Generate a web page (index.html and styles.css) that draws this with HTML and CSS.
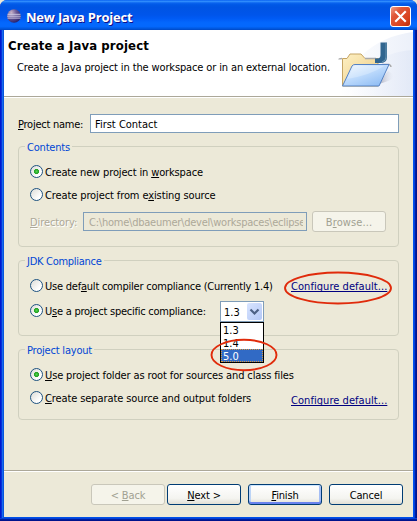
FILE: index.html
```html
<!DOCTYPE html>
<html lang="en">
<head>
<meta charset="utf-8">
<title>New Java Project</title>
<link rel="stylesheet" href="styles.css">
</head>
<body>
<div class="window">
  <header class="titlebar">
    <svg class="app-icon" width="14" height="14" viewBox="0 0 14 14">
      <defs><radialGradient id="ball" cx=".3" cy=".25" r=".8"><stop offset="0" stop-color="#c8b4c8"/><stop offset=".45" stop-color="#6c5c98"/><stop offset="1" stop-color="#28206c"/></radialGradient></defs>
      <circle cx="7" cy="7" r="6.8" fill="url(#ball)"/>
      <path d="M.5 5.3h13M.2 7.2h13.6M.5 9.1h13" stroke="#d5d2ea" stroke-width=".9"/>
    </svg>
    <h1 class="caption">New Java Project</h1>
    <button class="close" aria-label="Close"><svg width="19" height="19" viewBox="0 0 19 19"><path d="M5 5l9 9M14 5l-9 9" stroke="#fff" stroke-width="2.1" stroke-linecap="square"/></svg></button>
  </header>
  <div class="client">
    <section class="banner">
      <div class="banner-text">
        <h2 class="heading">Create a Java project</h2>
        <p class="description">Create a Java project in the workspace or in an external location.</p>
      </div>
      <svg class="banner-art" width="83" height="66" viewBox="330 30 83 66">
        <defs>
          <linearGradient id="haze" x1="0" x2="1"><stop offset="0" stop-color="#fff"/><stop offset="1" stop-color="#dce4f5"/></linearGradient>
          <linearGradient id="front" x1="0" y1="0" x2=".8" y2="1"><stop offset="0" stop-color="#f2f8ff"/><stop offset=".45" stop-color="#c3defd"/><stop offset="1" stop-color="#8ebcf4"/></linearGradient>
          <linearGradient id="back" x1="0" y1="0" x2="1" y2="1"><stop offset="0" stop-color="#fdf0c4"/><stop offset="1" stop-color="#eccb83"/></linearGradient>
          <linearGradient id="shade" x1="0" x2="1"><stop offset="0" stop-color="#a5a5b5"/><stop offset="1" stop-color="#dfe3ef" stop-opacity="0"/></linearGradient>
        </defs>
        <path d="M340 96C345 65 372 37 413 32V96Z" fill="url(#haze)" opacity=".55"/>
        <path d="M348 96C358 70 380 52 413 50V96Z" fill="url(#haze)" opacity=".6"/>
        <path d="M378 84L388 71Q397 76 392 79T378 84Z" fill="url(#shade)"/>
        <path d="M342.500 86V58.500H347L350 54H361L365 58.500H378V86Z" fill="url(#back)" stroke="#c5a565"/>
        <path d="M339 59.500Q339 58.500 342 58.500M365 58.500H376M382 64.500H389Q391 65 391 67" fill="none" stroke="#a9a9aa" stroke-width="1.500"/>
        <path d="M380.500 42.500H387V57Q387 63 380 63H375V58.500H377Q380.500 58.500 380.500 55Z" fill="#30658f"/>
        <path d="M386 43V57Q386 61 382 62" fill="none" stroke="#6793b0"/>
        <path d="M342.500 86L352 66Q353 64.500 355 64.500H389L379 86Z" fill="url(#front)" stroke="#5683c4"/>
        <path d="M345 83L354 66H384Q371 75 347 79Z" fill="#fff" opacity=".25"/>
      </svg>
    </section>

    <main class="content">
      <div class="name-row">
        <label class="t-name"><u>P</u>roject name:</label>
        <div class="field name-field"><span>First Contact</span></div>
      </div>

      <fieldset class="group contents">
        <legend class="t-contents">Contents</legend>
        <div class="row"><i class="radio on"></i><span class="text t-new">Create new project in <u>w</u>orkspace</span></div>
        <div class="row"><i class="radio"></i><span class="text t-existing">Create project from e<u>x</u>isting source</span></div>
        <div class="dir-row">
          <span class="text dir-label"><u>D</u>irectory:</span>
          <div class="field disabled"><span>C:\home\dbaeumer\devel\workspaces\eclipse</span></div>
          <button class="button off"><span class="t-browse">B<u>r</u>owse...</span></button>
        </div>
      </fieldset>

      <fieldset class="group jdk">
        <legend class="t-jdk">JDK Compliance</legend>
        <div class="row"><i class="radio"></i><span class="text t-default">Use def<u>a</u>ult compiler compliance (Currently 1.4)</span>
          <span class="link"><a>Configure default...</a>
            <svg class="mark mark-link" width="110" height="36" viewBox="0 0 110 36"><ellipse cx="55" cy="18" rx="53" ry="15.500"/></svg>
          </span>
        </div>
        <div class="row specific"><i class="radio on"></i><span class="text t-specific">U<u>s</u>e a project specific compliance:</span>
          <div class="combo"><span class="text">1.3</span>
            <div class="arrow"><svg width="15" height="17" viewBox="0 0 15 17"><path d="M3.500 6.500l4 4 4-4" fill="none" stroke="#4d6185" stroke-width="2.200"/></svg></div>
            <div class="options"><div>1.3</div><div>1.4</div><div class="selected">5.0</div>
              <svg class="mark mark-option" width="70" height="36" viewBox="0 0 70 36"><ellipse cx="35" cy="18" rx="32.500" ry="15.200"/></svg>
            </div>
          </div>
        </div>
      </fieldset>

      <fieldset class="group layout">
        <legend class="t-layout">Project layout</legend>
        <div class="row"><i class="radio on"></i><span class="text t-root"><u>U</u>se project folder as root for sources and class files</span></div>
        <div class="row"><i class="radio"></i><span class="text t-separate"><u>C</u>reate separate source and output folders</span>
          <span class="link low"><a>Configure default...</a></span>
        </div>
      </fieldset>
    </main>

    <footer class="buttons">
      <button class="button off"><span class="t-back">&lt; <u>B</u>ack</span></button>
      <button class="button"><span class="t-next"><u>N</u>ext &gt;</span></button>
      <button class="button primary"><span class="t-finish"><u>F</u>inish</span></button>
      <button class="button"><span class="t-cancel">Cancel</span></button>
    </footer>
  </div>
</div>
</body>
</html>
```
FILE: styles.css
```css
* { box-sizing: border-box; }
body {
  margin: 0;
  background: #ece9d8;
  font: 11px/13px "DejaVu Sans Condensed", "DejaVu Sans", sans-serif;
  font-stretch: condensed;
  color: #000;
  white-space: nowrap;
  overflow: hidden;
}
u { text-underline-offset: 1px; text-decoration-thickness: 1px; text-decoration-skip-ink: none; }
button { font: inherit; padding: 0; margin: 0; }
.window {
  width: 417px;
  height: 521px;
  padding: 0 4px 4px;
  border-radius: 7px 7px 0 0;
  background: linear-gradient(90deg, #0019cf 0 1px, #0831d9 1px 2px, #166aee 2px 3px, #0855dd 3px 4px, #0050e8 4px 413px, #0050ee 413px 414px, #0040dc 414px 415px, #001ea0 415px 416px, #00138c 416px);
  box-shadow: inset 0 -1px #00138c, inset 0 -2px #001ea0, inset 0 -3px #0441d8;
}
.titlebar {
  height: 30px;
  margin: 0 -4px;
  padding: 2px 6px 0 7px;
  display: flex;
  align-items: center;
  border-radius: 7px 7px 0 0;
  background: linear-gradient(#0058ee 0, #3593ff 4%, #0a63ee 10%, #0058e6 16%, #0054e3 24%, #0055eb 50%, #005bf5 62%, #0468fd 76%, #0468fd 88%, #0058e0 95%, #0048c4 100%);
}
.app-icon { flex: none; }
.caption {
  margin: 1px auto 0 5px;
  font: bold 13px/16px "Open Sans", sans-serif;
  letter-spacing: -.2px;
  color: #fff;
  text-shadow: 1px 1px #0f1089;
}
.close {
  width: 21px;
  height: 21px;
  margin-top: 1px;
  border: 1px solid #fff;
  border-radius: 3px;
  background: linear-gradient(135deg, #f0a08a, #e0583a 30%, #d8401c 75%, #b82c08);
}
.close svg { display: block; }
.client { height: 487px; background: #ece9d8; }
.banner {
  height: 68px;
  display: flex;
  justify-content: space-between;
  background: #fff;
  border-bottom: 1px solid #fff;
  box-shadow: inset 0 -1px #aca899;
}
.banner-art { height: 66px; flex: none; }
.banner-text { width: 326px; padding: 7px 0 0 4px; }
.heading { margin: 0; font-size: 13px; line-height: 17px; letter-spacing: .13px; }
.description { margin: 7px 0 0 9px; letter-spacing: -.13px; }
.content { height: 372px; padding: 16px 14px 0; }
.name-row { display: flex; align-items: center; justify-content: space-between; height: 19px; }
.t-name { padding-top: 2px; letter-spacing: -.25px; }
.field { height: 19px; border: 1px solid #7f9db9; background: #fff; padding: 3px 4px 0; overflow: hidden; }
.name-field { width: 309px; }
.group {
  margin: 0;
  border: 1px solid #d0d0bf;
  border-radius: 4px;
  padding: 0 12px 0 11px;
  min-width: 0;
}
.group legend { padding: 0 2px; margin-left: -5px; color: #0046d5; height: 13px; line-height: 15px; }
.row { display: flex; align-items: center; height: 23px; }
.text { padding-top: 2px; }
.contents { margin-top: 7px; height: 107px; }
.group legend + .row { margin-top: 7px; }
.t-contents, .t-layout { letter-spacing: -.2px; }
.t-jdk { letter-spacing: -.28px; }
.t-new { letter-spacing: -.14px; }
.t-existing { letter-spacing: -.11px; }
.t-default { letter-spacing: -.22px; }
.t-specific { letter-spacing: -.24px; }
.t-root { letter-spacing: -.13px; }
.t-separate { letter-spacing: -.1px; }
.t-browse { letter-spacing: .1px; }
.t-back, .t-next, .t-finish, .t-cancel { letter-spacing: -.15px; }
.radio {
  flex: none;
  width: 13px;
  height: 13px;
  margin-right: 2px;
  border: 1px solid #1d5281;
  border-radius: 50%;
  background: linear-gradient(135deg, #dcdcd7, #fff 75%);
}
.radio.on { background: radial-gradient(circle at 50% 50%, #55d551 0, #21a121 2.200px, transparent 2.900px), linear-gradient(135deg, #dcdcd7, #fff 75%); }
.dir-row { display: flex; align-items: center; height: 21px; margin-top: 5px; }
.dir-label { width: 53px; color: #aca899; text-shadow: 1px 1px #fff; letter-spacing: -.1px; }
.disabled { width: 224px; margin-right: 5px; padding: 3px 3px 0 5px; background: #ece9d8; color: #aca899; }
.disabled span { display: block; overflow: hidden; letter-spacing: -.23px; }
.button {
  flex: none;
  width: 74px;
  height: 21px;
  padding-top: 2px;
  border: 1px solid #003c74;
  border-radius: 3px;
  background: linear-gradient(#fff, #f4f4f0 70%, #e2dfd5);
  color: #000;
  text-align: center;
}
.button.off { border-color: #c9c7ba; background: #f5f4ea; color: #a1a192; }
.button.primary { box-shadow: inset 0 1px #cee7ff, inset 0 -2px #6982ee, inset 2px 0 #bcd4f6, inset -2px 0 #a5bef4; }
.jdk { margin-top: 7px; height: 82px; }
.link { position: relative; margin-left: auto; margin-right: -1px; width: 96px; height: 13px; line-height: 15px; color: #000080; letter-spacing: .05px; }
.link a { text-decoration: underline; text-decoration-skip-ink: none; text-underline-offset: 1px; }
.link.low { margin-top: 4px; }
.mark { position: absolute; fill: none; stroke: #e02b0b; stroke-width: 1.900; }
.mark-link { left: -8px; top: -9px; }
.specific { margin-top: 2px; }
.combo {
  position: relative;
  z-index: 2;
  display: flex;
  width: 44px;
  height: 21px;
  margin: 2px 122px 0 auto;
  padding: 1px 1px 1px 3px;
  align-items: center;
  justify-content: space-between;
  border: 1px solid #7f9db9;
  background: #fff;
}
.arrow { width: 15px; height: 17px; border-radius: 2px; background: linear-gradient(135deg, #d8e4ff, #b4c8f6); }
.arrow svg { display: block; }
.options { position: absolute; left: -1px; top: 20px; width: 44px; height: 41px; border: 1px solid #000; background: #fff; }
.options div { height: 13px; line-height: 15px; padding-left: 2px; }
.options .selected { background: #316ac5; color: #fff; outline: 1px dotted #d89a40; outline-offset: -1px; }
.mark-option { left: -12px; top: 14px; }
.layout { margin-top: 7px; height: 77px; }
.buttons {
  display: flex;
  height: 47px;
  padding: 13px 10px 0 87px;
  border-top: 1px solid #aca899;
  box-shadow: inset 0 1px #fff;
}
.buttons .button + .button { margin-left: 7px; }
.buttons .button.off + .button { margin-left: 2px; }
```
